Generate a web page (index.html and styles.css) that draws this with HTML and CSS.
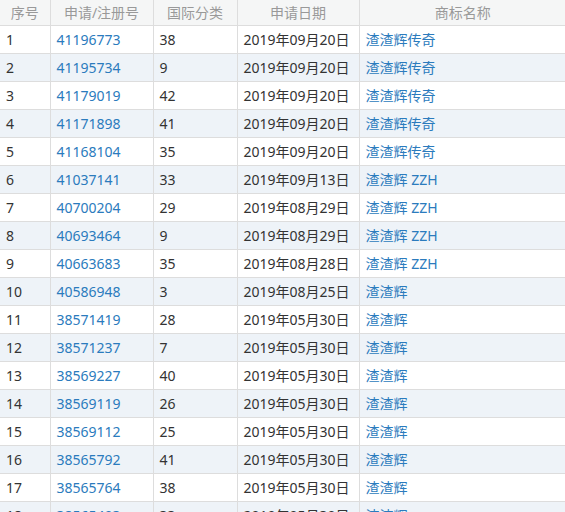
FILE: index.html
```html
<!DOCTYPE html>
<html lang="zh">
<head>
<meta charset="utf-8">
<link rel="stylesheet" href="styles.css">
</head>
<body>
<table class="tm">
  <colgroup>
    <col class="c1"><col class="c2"><col class="c3"><col class="c4"><col class="c5">
  </colgroup>
  <thead>
    <tr><th>序号</th><th>申请/注册号</th><th>国际分类</th><th>申请日期</th><th>商标名称</th></tr>
  </thead>
  <tbody>
    <tr><td>1</td><td><a>41196773</a></td><td>38</td><td>2019年09月20日</td><td><a>渣渣辉传奇</a></td></tr>
    <tr><td>2</td><td><a>41195734</a></td><td>9</td><td>2019年09月20日</td><td><a>渣渣辉传奇</a></td></tr>
    <tr><td>3</td><td><a>41179019</a></td><td>42</td><td>2019年09月20日</td><td><a>渣渣辉传奇</a></td></tr>
    <tr><td>4</td><td><a>41171898</a></td><td>41</td><td>2019年09月20日</td><td><a>渣渣辉传奇</a></td></tr>
    <tr><td>5</td><td><a>41168104</a></td><td>35</td><td>2019年09月20日</td><td><a>渣渣辉传奇</a></td></tr>
    <tr><td>6</td><td><a>41037141</a></td><td>33</td><td>2019年09月13日</td><td><a>渣渣辉 ZZH</a></td></tr>
    <tr><td>7</td><td><a>40700204</a></td><td>29</td><td>2019年08月29日</td><td><a>渣渣辉 ZZH</a></td></tr>
    <tr><td>8</td><td><a>40693464</a></td><td>9</td><td>2019年08月29日</td><td><a>渣渣辉 ZZH</a></td></tr>
    <tr><td>9</td><td><a>40663683</a></td><td>35</td><td>2019年08月28日</td><td><a>渣渣辉 ZZH</a></td></tr>
    <tr><td>10</td><td><a>40586948</a></td><td>3</td><td>2019年08月25日</td><td><a>渣渣辉</a></td></tr>
    <tr><td>11</td><td><a>38571419</a></td><td>28</td><td>2019年05月30日</td><td><a>渣渣辉</a></td></tr>
    <tr><td>12</td><td><a>38571237</a></td><td>7</td><td>2019年05月30日</td><td><a>渣渣辉</a></td></tr>
    <tr><td>13</td><td><a>38569227</a></td><td>40</td><td>2019年05月30日</td><td><a>渣渣辉</a></td></tr>
    <tr><td>14</td><td><a>38569119</a></td><td>26</td><td>2019年05月30日</td><td><a>渣渣辉</a></td></tr>
    <tr><td>15</td><td><a>38569112</a></td><td>25</td><td>2019年05月30日</td><td><a>渣渣辉</a></td></tr>
    <tr><td>16</td><td><a>38565792</a></td><td>41</td><td>2019年05月30日</td><td><a>渣渣辉</a></td></tr>
    <tr><td>17</td><td><a>38565764</a></td><td>38</td><td>2019年05月30日</td><td><a>渣渣辉</a></td></tr>
    <tr><td>18</td><td><a>38565493</a></td><td>33</td><td>2019年05月30日</td><td><a>渣渣辉</a></td></tr>
  </tbody>
</table>
</body>
</html>
```
FILE: styles.css
```css
html, body {
  margin: 0;
  padding: 0;
  background: #fff;
  overflow: hidden;
}
.tm {
  border-collapse: collapse;
  table-layout: fixed;
  width: 566px;
  font-family: "Noto Sans", "Noto Sans CJK SC", sans-serif;
  font-size: 14px;
  color: #333;
}
.c1 { width: 50px; }
.c2 { width: 103px; }
.c3 { width: 84px; }
.c4 { width: 122px; }
.c5 { width: 207px; }
.tm th {
  height: 25px;
  padding: 0;
  background: #f5f6f6;
  color: #999;
  font-weight: normal;
  text-align: center;
  border-left: 1px solid #ddd;
  border-bottom: 1px solid #ddd;
  line-height: 25px;
}
.tm td {
  height: 27px;
  padding: 0 0 0 6px;
  border-left: 1px solid #ddd;
  border-bottom: 1px solid #ddd;
  line-height: 27px;
  white-space: nowrap;
}
.tm th:first-child, .tm td:first-child { border-left: none; }
.tm tbody tr:nth-child(even) td { background: #eef3f8; }
.tm a { color: #2b7bbd; text-decoration: none; }
```
